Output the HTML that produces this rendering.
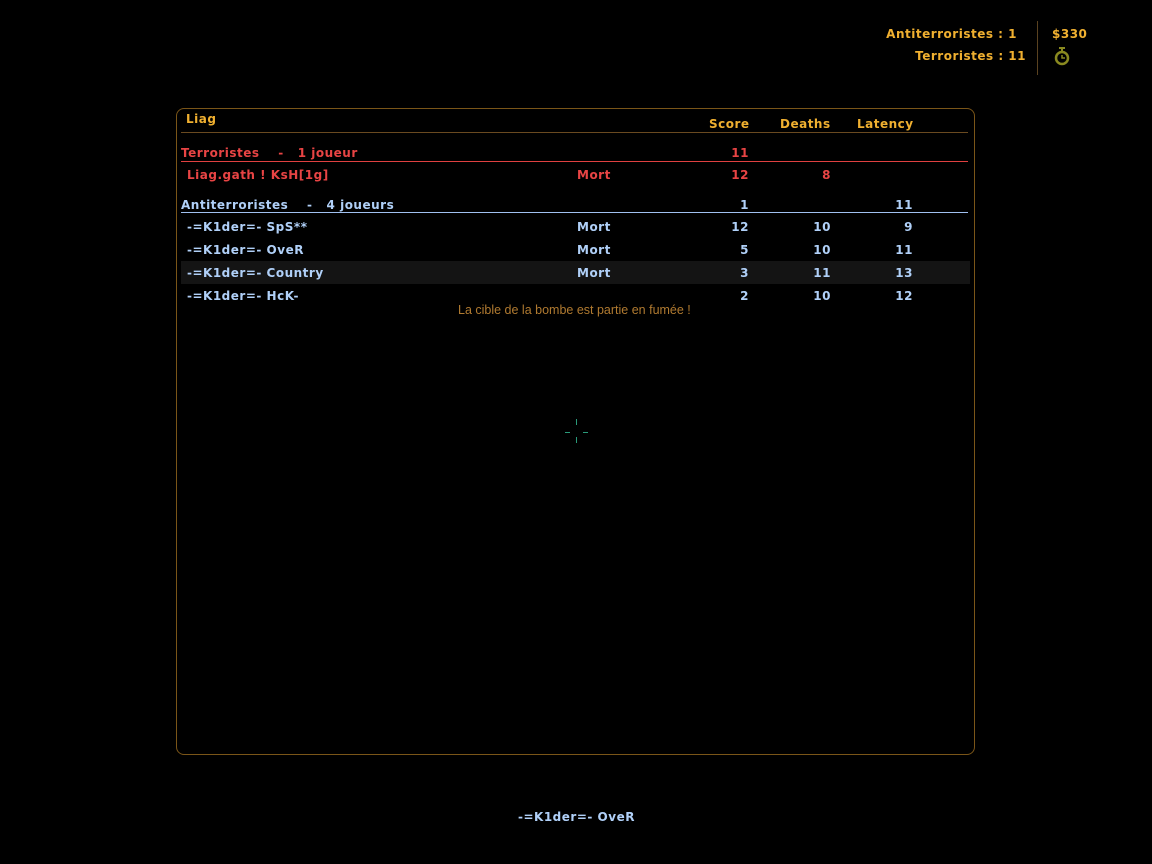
<!DOCTYPE html><html><head><style>
body{margin:0;width:1152px;height:864px;background:#000;position:relative;overflow:hidden;font-family:"DejaVu Sans","Liberation Sans",sans-serif;font-size:12px;font-weight:bold;letter-spacing:0.5px}
.a{position:absolute;white-space:pre;line-height:14px}
.o{color:#f0b030}.r{color:#e84444}.b{color:#b0d0f8}
.R{text-align:right}
</style></head><body>
<div class="a o R" style="right:135px;top:27px">Antiterroristes : 1</div>
<div class="a o R" style="right:126px;top:49px">Terroristes : 11</div>
<div class="a" style="left:1037px;top:21px;width:1px;height:54px;background:#5a4220"></div>
<div class="a o" style="left:1052px;top:27px">$330</div>
<svg class="a" style="left:1052px;top:46px" width="20" height="20" viewBox="0 0 20 20"><rect x="7" y="1" width="6" height="2" fill="#8a8a20"/><rect x="9" y="3" width="2" height="2" fill="#8a8a20"/><circle cx="10" cy="12" r="6" fill="none" stroke="#8a8a20" stroke-width="2.5"/><path d="M10 9v3h3" stroke="#8a8a20" stroke-width="1.5" fill="none"/></svg>
<div class="a" style="left:176px;top:108px;width:797px;height:645px;border:1px solid #7a5518;border-radius:8px"></div>
<div class="a o" style="left:186px;top:112px">Liag</div>
<div class="a o" style="left:709px;top:117px">Score</div>
<div class="a o" style="left:780px;top:117px">Deaths</div>
<div class="a o" style="left:857px;top:117px">Latency</div>
<div class="a" style="left:181px;top:132px;width:787px;height:1px;background:#6a4a20"></div>
<div class="a r" style="left:181px;top:146px">Terroristes    -   1 joueur</div>
<div class="a r R" style="right:403px;top:146px">11</div>
<div class="a" style="left:181px;top:161px;width:787px;height:1px;background:#e04040"></div>
<div class="a r" style="left:187px;top:168px">Liag.gath ! KsH[1g]</div>
<div class="a r" style="left:577px;top:168px">Mort</div>
<div class="a r R" style="right:403px;top:168px">12</div>
<div class="a r R" style="right:321px;top:168px">8</div>
<div class="a b" style="left:181px;top:198px">Antiterroristes    -   4 joueurs</div>
<div class="a b R" style="right:403px;top:198px">1</div>
<div class="a b R" style="right:239px;top:198px">11</div>
<div class="a" style="left:181px;top:212px;width:787px;height:1px;background:#a0c0f0"></div>
<div class="a" style="left:181px;top:261px;width:789px;height:23px;background:#141414"></div>
<div class="a b" style="left:187px;top:220px">-=K1der=- SpS**</div><div class="a b" style="left:577px;top:220px">Mort</div><div class="a b R" style="right:403px;top:220px">12</div><div class="a b R" style="right:321px;top:220px">10</div><div class="a b R" style="right:239px;top:220px">9</div>
<div class="a b" style="left:187px;top:243px">-=K1der=- OveR</div><div class="a b" style="left:577px;top:243px">Mort</div><div class="a b R" style="right:403px;top:243px">5</div><div class="a b R" style="right:321px;top:243px">10</div><div class="a b R" style="right:239px;top:243px">11</div>
<div class="a b" style="left:187px;top:266px">-=K1der=- Country</div><div class="a b" style="left:577px;top:266px">Mort</div><div class="a b R" style="right:403px;top:266px">3</div><div class="a b R" style="right:321px;top:266px">11</div><div class="a b R" style="right:239px;top:266px">13</div>
<div class="a b" style="left:187px;top:289px">-=K1der=- HcK-</div><div class="a b R" style="right:403px;top:289px">2</div><div class="a b R" style="right:321px;top:289px">10</div><div class="a b R" style="right:239px;top:289px">12</div>
<div class="a" style="left:458px;top:303px;color:#b07a30;font-weight:normal;font-size:12.5px;letter-spacing:0;font-family:'Liberation Sans',sans-serif">La cible de la bombe est partie en fumée !</div>
<div class="a" style="left:576px;top:419px;width:1px;height:6px;background:#2a9a7a"></div>
<div class="a" style="left:576px;top:437px;width:1px;height:6px;background:#2a9a7a"></div>
<div class="a" style="left:565px;top:432px;width:5px;height:1px;background:#2a9a7a"></div>
<div class="a" style="left:583px;top:432px;width:5px;height:1px;background:#2a9a7a"></div>
<div class="a b" style="left:518px;top:810px">-=K1der=- OveR</div>
</body></html>
